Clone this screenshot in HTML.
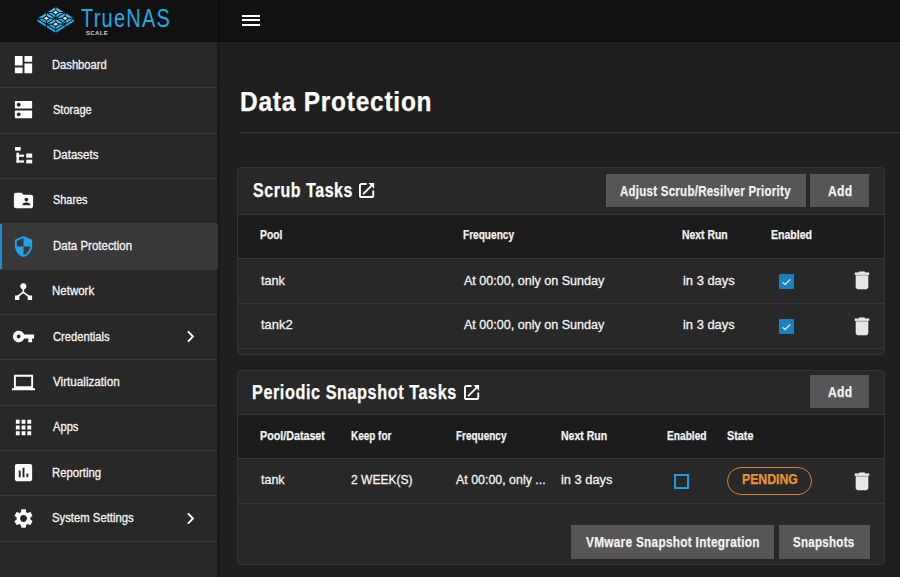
<!DOCTYPE html>
<html><head><meta charset="utf-8">
<style>
*{margin:0;padding:0;box-sizing:border-box}
html,body{width:900px;height:577px;overflow:hidden;background:#1f1f1f;font-family:"Liberation Sans",sans-serif;color:#fff}
.abs{position:absolute}
.t{position:absolute;white-space:nowrap;line-height:1;transform-origin:0 0}
</style></head><body>
<div class="abs" style="left:0px;top:0px;width:900px;height:42px;background:#111;"></div>
<div class="abs" style="left:0px;top:42px;width:218px;height:535px;background:#282828;"></div>
<div class="abs" style="left:217.3px;top:42px;width:2.6px;height:535px;background:#1a1a1a;"></div><div class="abs" style="left:217.6px;top:0px;width:2px;height:42px;background:#0c0c0c;"></div><div class="abs" style="left:0px;top:40.6px;width:900px;height:1.6px;background:#0b0b0b;"></div>
<svg class="abs" style="left:0;top:0" width="90" height="42" viewBox="0 0 90 42"><path d="M37.0 18.299999999999997 L55.7 30.0 L74.4 18.299999999999997 L74.4 21.699999999999996 L55.7 33.4 L37.0 21.699999999999996Z" fill="#1ea6e6" stroke="#0d0d0d" stroke-width="0.9" stroke-linejoin="round"/><path d="M55.7 30.0 V33.4 M46.35 24.15 V27.549999999999997 M65.05 24.15 V27.549999999999997" stroke="#0d0d0d" stroke-width="0.9"/><path d="M55.70 6.60 L65.05 12.45 L55.70 18.30 L46.35 12.45Z" fill="#0d0d0d"/><path d="M55.70 6.60 L65.05 12.45 L59.40 12.45 L55.70 10.15Z" fill="#46c4f6" stroke="#0d0d0d" stroke-width="0.8" stroke-linejoin="round"/><path d="M65.05 12.45 L55.70 18.30 L55.70 14.75 L59.40 12.45Z" fill="#27aeec" stroke="#0d0d0d" stroke-width="0.8" stroke-linejoin="round"/><path d="M55.70 18.30 L46.35 12.45 L52.00 12.45 L55.70 14.75Z" fill="#22a5e6" stroke="#0d0d0d" stroke-width="0.8" stroke-linejoin="round"/><path d="M46.35 12.45 L55.70 6.60 L55.70 10.15 L52.00 12.45Z" fill="#3dbcf3" stroke="#0d0d0d" stroke-width="0.8" stroke-linejoin="round"/><path d="M55.7 10.85 L58.2 12.45 L55.7 14.049999999999999 L53.2 12.45Z" fill="#e9dfdc"/><path d="M46.35 12.45 L55.70 18.30 L46.35 24.15 L37.00 18.30Z" fill="#0d0d0d"/><path d="M46.35 12.45 L55.70 18.30 L50.05 18.30 L46.35 16.00Z" fill="#46c4f6" stroke="#0d0d0d" stroke-width="0.8" stroke-linejoin="round"/><path d="M55.70 18.30 L46.35 24.15 L46.35 20.60 L50.05 18.30Z" fill="#27aeec" stroke="#0d0d0d" stroke-width="0.8" stroke-linejoin="round"/><path d="M46.35 24.15 L37.00 18.30 L42.65 18.30 L46.35 20.60Z" fill="#22a5e6" stroke="#0d0d0d" stroke-width="0.8" stroke-linejoin="round"/><path d="M37.00 18.30 L46.35 12.45 L46.35 16.00 L42.65 18.30Z" fill="#3dbcf3" stroke="#0d0d0d" stroke-width="0.8" stroke-linejoin="round"/><path d="M46.35 16.699999999999996 L48.85 18.299999999999997 L46.35 19.9 L43.85 18.299999999999997Z" fill="#e9dfdc"/><path d="M65.05 12.45 L74.40 18.30 L65.05 24.15 L55.70 18.30Z" fill="#0d0d0d"/><path d="M65.05 12.45 L74.40 18.30 L68.75 18.30 L65.05 16.00Z" fill="#46c4f6" stroke="#0d0d0d" stroke-width="0.8" stroke-linejoin="round"/><path d="M74.40 18.30 L65.05 24.15 L65.05 20.60 L68.75 18.30Z" fill="#27aeec" stroke="#0d0d0d" stroke-width="0.8" stroke-linejoin="round"/><path d="M65.05 24.15 L55.70 18.30 L61.35 18.30 L65.05 20.60Z" fill="#22a5e6" stroke="#0d0d0d" stroke-width="0.8" stroke-linejoin="round"/><path d="M55.70 18.30 L65.05 12.45 L65.05 16.00 L61.35 18.30Z" fill="#3dbcf3" stroke="#0d0d0d" stroke-width="0.8" stroke-linejoin="round"/><path d="M65.05 16.699999999999996 L67.55 18.299999999999997 L65.05 19.9 L62.55 18.299999999999997Z" fill="#e9dfdc"/><path d="M55.70 18.30 L65.05 24.15 L55.70 30.00 L46.35 24.15Z" fill="#0d0d0d"/><path d="M55.70 18.30 L65.05 24.15 L59.40 24.15 L55.70 21.85Z" fill="#46c4f6" stroke="#0d0d0d" stroke-width="0.8" stroke-linejoin="round"/><path d="M65.05 24.15 L55.70 30.00 L55.70 26.45 L59.40 24.15Z" fill="#27aeec" stroke="#0d0d0d" stroke-width="0.8" stroke-linejoin="round"/><path d="M55.70 30.00 L46.35 24.15 L52.00 24.15 L55.70 26.45Z" fill="#22a5e6" stroke="#0d0d0d" stroke-width="0.8" stroke-linejoin="round"/><path d="M46.35 24.15 L55.70 18.30 L55.70 21.85 L52.00 24.15Z" fill="#3dbcf3" stroke="#0d0d0d" stroke-width="0.8" stroke-linejoin="round"/><path d="M55.7 22.549999999999997 L58.2 24.15 L55.7 25.75 L53.2 24.15Z" fill="#e9dfdc"/></svg>
<div class="t" style="left:80.6px;top:5.6px;font-size:25px;color:#22a9e6;transform:scaleX(0.8);letter-spacing:1.55px">TrueNAS</div>
<div class="t" style="left:86px;top:30px;font-size:6px;font-weight:bold;color:#cfcfcf;letter-spacing:0.35px">SCALE</div>
<div class="abs" style="left:242px;top:14.85px;width:17.8px;height:2.1px;background:#fff;"></div>
<div class="abs" style="left:242px;top:19.35px;width:17.8px;height:2.1px;background:#fff;"></div>
<div class="abs" style="left:242px;top:23.9px;width:17.8px;height:2.1px;background:#fff;"></div>
<div class="abs" style="left:0;top:87.30px;width:217.2px;height:1px;background:#3a3a3a"></div><svg class="abs" style="left:11.8px;top:53.1px;overflow:visible" width="23.04" height="23.04" viewBox="0 0 24 24"><path fill="#fff" fill-rule="nonzero" d="M3 13h8V3H3v10zm0 8h8v-6H3v6zm10 0h8V11h-8v10zm0-18v6h8V3h-8z"/></svg><div class="t" style="left:52.22px;top:58.54px;font-size:12.3px;font-weight:400;color:#f4f4f4;transform:scaleX(0.9097);-webkit-text-stroke:0.3px #f4f4f4;letter-spacing:0px;">Dashboard</div><div class="abs" style="left:0;top:132.65px;width:217.2px;height:1px;background:#3a3a3a"></div><svg class="abs" style="left:11.8px;top:98.45px;overflow:visible" width="23.04" height="23.04" viewBox="0 0 24 24"><path fill="#fff" fill-rule="nonzero" d="M20 13H4c-.55 0-1 .45-1 1v6c0 .55.45 1 1 1h16c.55 0 1-.45 1-1v-6c0-.55-.45-1-1-1zM7 19c-1.1 0-2-.9-2-2s.9-2 2-2 2 .9 2 2-.9 2-2 2zM20 3H4c-.55 0-1 .45-1 1v6c0 .55.45 1 1 1h16c.55 0 1-.45 1-1V4c0-.55-.45-1-1-1zM7 9c-1.1 0-2-.9-2-2s.9-2 2-2 2 .9 2 2-.9 2-2 2z"/></svg><div class="t" style="left:53.14px;top:104.01px;font-size:12.3px;font-weight:400;color:#f4f4f4;transform:scaleX(0.8989);-webkit-text-stroke:0.3px #f4f4f4;letter-spacing:0px;">Storage</div><div class="abs" style="left:0;top:178.00px;width:217.2px;height:1px;background:#3a3a3a"></div><svg class="abs" style="left:14.8px;top:147.1px" width="20" height="20" viewBox="0 0 20 20"><g fill="#fff"><rect x="0" y="0" width="5.7" height="3.6"/><rect x="1.5" y="5.7" width="2.4" height="9.9"/><rect x="1.5" y="7.6" width="7.6" height="2.2"/><rect x="1.5" y="13.4" width="7.6" height="2.2"/><rect x="11.2" y="6.5" width="6" height="4.2"/><rect x="11.2" y="12.7" width="6" height="3.7"/></g></svg><div class="t" style="left:52.61px;top:148.78px;font-size:12.3px;font-weight:400;color:#f4f4f4;transform:scaleX(0.9367);-webkit-text-stroke:0.3px #f4f4f4;letter-spacing:0px;">Datasets</div><div class="abs" style="left:0;top:223.35px;width:217.2px;height:1px;background:#3a3a3a"></div><svg class="abs" style="left:11.8px;top:189.15px;overflow:visible" width="23.04" height="23.04" viewBox="0 0 24 24"><path fill="#fff" fill-rule="nonzero" d="M20 6h-8l-2-2H4c-1.1 0-1.99.9-1.99 2L2 18c0 1.1.9 2 2 2h16c1.1 0 2-.9 2-2V8c0-1.1-.9-2-2-2zm-5 3c1.1 0 2 .9 2 2s-.9 2-2 2-2-.9-2-2 .9-2 2-2zm4 8h-8v-1c0-1.33 2.67-2 4-2s4 .67 4 2v1z"/></svg><div class="t" style="left:52.85px;top:193.9px;font-size:12.3px;font-weight:400;color:#f4f4f4;transform:scaleX(0.8871);-webkit-text-stroke:0.3px #f4f4f4;letter-spacing:0px;">Shares</div><div class="abs" style="left:0;top:223.70px;width:218px;height:45.35px;background:#383838"></div><div class="abs" style="left:0;top:223.70px;width:1.7px;height:45.35px;background:#1a8dd0"></div><div class="abs" style="left:0;top:268.70px;width:217.2px;height:1px;background:#3a3a3a"></div><svg class="abs" style="left:11.8px;top:234.5px;overflow:visible" width="23.04" height="23.04" viewBox="0 0 24 24"><path fill="#1ea3e8" fill-rule="evenodd" d="M12 1L3 5v6c0 5.55 3.84 10.74 9 12 5.16-1.26 9-6.45 9-12V5l-9-4zm0 10.99h7c-.53 4.12-3.28 7.79-7 8.94V12H5V6.3l7-3.11v8.8z"/></svg><div class="t" style="left:52.62px;top:239.68px;font-size:12.3px;font-weight:400;color:#f4f4f4;transform:scaleX(0.9336);-webkit-text-stroke:0.3px #f4f4f4;letter-spacing:0px;">Data Protection</div><div class="abs" style="left:0;top:314.05px;width:217.2px;height:1px;background:#3a3a3a"></div><svg class="abs" style="left:14.8px;top:281.95px" width="20" height="20" viewBox="0 0 20 20"><circle cx="8.3" cy="4.3" r="3.0" fill="#fff"/><path d="M8.3 6.5 V10.2 L2.6 14.6 M8.3 10.2 L14.2 14.6" stroke="#fff" stroke-width="1.7" fill="none"/><rect x="0" y="13.5" width="4.3" height="4.5" fill="#fff"/><rect x="12.7" y="13.5" width="4.4" height="4.5" fill="#fff"/></svg><div class="t" style="left:51.9px;top:285.48px;font-size:12.3px;font-weight:400;color:#f4f4f4;transform:scaleX(0.9354);-webkit-text-stroke:0.3px #f4f4f4;letter-spacing:0px;">Network</div><div class="abs" style="left:0;top:359.40px;width:217.2px;height:1px;background:#3a3a3a"></div><svg class="abs" style="left:11.8px;top:325.2px;overflow:visible" width="23.04" height="23.04" viewBox="0 0 24 24"><path fill="#fff" fill-rule="nonzero" d="M12.65 10C11.83 7.67 9.61 6 7 6c-3.31 0-6 2.69-6 6s2.69 6 6 6c2.61 0 4.83-1.67 5.65-4H17v4h4v-4h2v-4H12.65zM7 14c-1.1 0-2-.9-2-2s.9-2 2-2 2 .9 2 2-.9 2-2 2z"/></svg><div class="t" style="left:52.6px;top:330.6px;font-size:12.3px;font-weight:400;color:#f4f4f4;transform:scaleX(0.9105);-webkit-text-stroke:0.3px #f4f4f4;letter-spacing:0px;">Credentials</div><svg class="abs" style="left:178.7px;top:325.2px;overflow:visible" width="23.04" height="23.04" viewBox="0 0 24 24"><path fill="#fff" fill-rule="nonzero" d="M10 6L8.59 7.41 13.17 12l-4.58 4.59L10 18l6-6z"/></svg><div class="abs" style="left:0;top:404.75px;width:217.2px;height:1px;background:#3a3a3a"></div><svg class="abs" style="left:11.8px;top:370.55px;overflow:visible" width="23.04" height="23.04" viewBox="0 0 24 24"><path fill="#fff" fill-rule="nonzero" d="M2 4h20v14h2v2H0v-2h2zM4 6v10h16V6z"/></svg><div class="t" style="left:52.78px;top:375.63px;font-size:12.3px;font-weight:400;color:#f4f4f4;transform:scaleX(0.9498);-webkit-text-stroke:0.3px #f4f4f4;letter-spacing:0px;">Virtualization</div><div class="abs" style="left:0;top:450.10px;width:217.2px;height:1px;background:#3a3a3a"></div><svg class="abs" style="left:11.8px;top:415.9px;overflow:visible" width="23.04" height="23.04" viewBox="0 0 24 24"><path fill="#fff" fill-rule="nonzero" d="M4 8h4V4H4v4zm6 12h4v-4h-4v4zm-6 0h4v-4H4v4zm0-6h4v-4H4v4zm6 0h4v-4h-4v4zm6-10v4h4V4h-4zm-6 4h4V4h-4v4zm6 6h4v-4h-4v4zm0 6h4v-4h-4v4z"/></svg><div class="t" style="left:52.84px;top:421.25px;font-size:12.3px;font-weight:400;color:#f4f4f4;transform:scaleX(0.9065);-webkit-text-stroke:0.3px #f4f4f4;letter-spacing:0px;">Apps</div><div class="abs" style="left:0;top:495.45px;width:217.2px;height:1px;background:#3a3a3a"></div><svg class="abs" style="left:11.8px;top:461.25px;overflow:visible" width="23.04" height="23.04" viewBox="0 0 24 24"><path fill="#fff" fill-rule="nonzero" d="M19 3H5c-1.1 0-2 .9-2 2v14c0 1.1.9 2 2 2h14c1.1 0 2-.9 2-2V5c0-1.1-.9-2-2-2zM9 17H7v-7h2v7zm4 0h-2V7h2v10zm4 0h-2v-4h2v4z"/></svg><div class="t" style="left:52.05px;top:466.53px;font-size:12.3px;font-weight:400;color:#f4f4f4;transform:scaleX(0.9207);-webkit-text-stroke:0.3px #f4f4f4;letter-spacing:0px;">Reporting</div><div class="abs" style="left:0;top:540.80px;width:217.2px;height:1px;background:#3a3a3a"></div><svg class="abs" style="left:11.8px;top:506.6px;overflow:visible" width="23.04" height="23.04" viewBox="0 0 24 24"><path fill="#fff" fill-rule="nonzero" d="M19.14 12.94c.04-.3.06-.61.06-.94 0-.32-.02-.64-.07-.94l2.03-1.58c.18-.14.23-.41.12-.61l-1.92-3.32c-.12-.22-.37-.29-.59-.22l-2.39.96c-.5-.38-1.03-.7-1.62-.94l-.36-2.54c-.04-.24-.24-.41-.48-.41h-3.84c-.24 0-.43.17-.47.41l-.36 2.54c-.59.24-1.130.57-1.62.94l-2.39-.96c-.22-.08-.47 0-.59.22L2.74 8.87c-.12.21-.08.47.12.61l2.03 1.58c-.05.3-.09.63-.09.94s.02.64.07.94l-2.030 1.58c-.18.14-.23.41-.12.61l1.92 3.32c.12.22.37.29.59.22l2.39-.96c.5.38 1.03.7 1.62.94l.36 2.54c.05.24.24.41.48.41h3.84c.24 0 .44-.17.47-.41l.36-2.54c.59-.24 1.13-.56 1.62-.94l2.39.96c.22.08.47 0 .59-.22l1.92-3.32c.12-.22.07-.47-.12-.61l-2.01-1.58zM12 15.6c-1.98 0-3.6-1.620-3.6-3.6s1.62-3.6 3.6-3.6 3.6 1.62 3.6 3.6-1.62 3.6-3.6 3.6z"/></svg><div class="t" style="left:52.44px;top:512.08px;font-size:12.3px;font-weight:400;color:#f4f4f4;transform:scaleX(0.92);-webkit-text-stroke:0.3px #f4f4f4;letter-spacing:0px;">System Settings</div><svg class="abs" style="left:178.7px;top:506.6px;overflow:visible" width="23.04" height="23.04" viewBox="0 0 24 24"><path fill="#fff" fill-rule="nonzero" d="M10 6L8.59 7.41 13.17 12l-4.58 4.59L10 18l6-6z"/></svg>
<div class="t" style="left:239.52px;top:87.24px;font-size:28.5px;font-weight:700;color:#fff;transform:scaleX(0.8581);-webkit-text-stroke:0.25px #fff;letter-spacing:0.9px;">Data Protection</div>
<div class="abs" style="left:240px;top:131.5px;width:660px;height:1px;background:#3a3a3a;"></div>
<div class="abs" style="left:237px;top:167px;width:648px;height:187.5px;background:#282828;border:1px solid #353535;border-radius:4px"></div>
<div class="abs" style="left:238px;top:214.4px;width:646px;height:43.6px;background:#1c1c1c;"></div>
<div class="abs" style="left:238px;top:213.6px;width:646px;height:1px;background:#383838;"></div>
<div class="abs" style="left:238px;top:257.8px;width:646px;height:1px;background:#383838;"></div>
<div class="abs" style="left:238px;top:303.3px;width:646px;height:1px;background:#383838;"></div>
<div class="abs" style="left:238px;top:347.5px;width:646px;height:1px;background:#383838;"></div>
<div class="t" style="left:252.86px;top:180.54px;font-size:19.6px;font-weight:700;color:#fff;transform:scaleX(0.8141);-webkit-text-stroke:0.25px #fff;letter-spacing:0.7px;">Scrub Tasks</div>
<svg class="abs" style="left:358.8px;top:182.6px;overflow:visible" width="16" height="16" viewBox="0 0 16 16"><path d="M7.6 0.95 H2.6 Q0.95 0.95 0.95 2.6 V12.4 Q0.95 14.05 2.6 14.05 H12.6 Q14.25 14.05 14.25 12.4 V7.6" stroke="#fff" stroke-width="1.9" fill="none"/><path d="M4.6 10.6 L12.6 2.6" stroke="#fff" stroke-width="1.9" stroke-linecap="round"/><path d="M9.4 0.1 H15.1 V5.8 Z" fill="#fff"/></svg>
<div class="abs" style="left:605.6px;top:174px;width:200.2px;height:33.2px;background:#565656;"></div>
<div class="t" style="left:620.47px;top:183.8px;font-size:14.2px;font-weight:700;color:#f2f2f2;transform:scaleX(0.8073);-webkit-text-stroke:0.25px #f2f2f2;letter-spacing:0.35px;">Adjust Scrub/Resilver Priority</div>
<div class="abs" style="left:810px;top:174px;width:59.4px;height:33.2px;background:#565656;"></div>
<div class="t" style="left:827.94px;top:184.19px;font-size:14.2px;font-weight:700;color:#f2f2f2;transform:scaleX(0.8497);-webkit-text-stroke:0.25px #f2f2f2;letter-spacing:0.35px;">Add</div>
<div class="t" style="left:260.37px;top:228.5px;font-size:12.3px;font-weight:700;color:#f2f2f2;transform:scaleX(0.8408);-webkit-text-stroke:0.25px #f2f2f2;letter-spacing:0px;">Pool</div>
<div class="t" style="left:463.23px;top:228.5px;font-size:12.3px;font-weight:700;color:#f2f2f2;transform:scaleX(0.8204);-webkit-text-stroke:0.25px #f2f2f2;letter-spacing:0px;">Frequency</div>
<div class="t" style="left:682.31px;top:228.5px;font-size:12.3px;font-weight:700;color:#f2f2f2;transform:scaleX(0.8452);-webkit-text-stroke:0.25px #f2f2f2;letter-spacing:0px;">Next Run</div>
<div class="t" style="left:771.39px;top:228.5px;font-size:12.3px;font-weight:700;color:#f2f2f2;transform:scaleX(0.8583);-webkit-text-stroke:0.25px #f2f2f2;letter-spacing:0px;">Enabled</div>
<div class="t" style="left:260.51px;top:273.99px;font-size:13.2px;font-weight:400;color:#f2f2f2;transform:scaleX(0.9613);-webkit-text-stroke:0.3px #f2f2f2;letter-spacing:0px;">tank</div>
<div class="t" style="left:464.14px;top:273.99px;font-size:13.2px;font-weight:400;color:#f2f2f2;transform:scaleX(0.9519);-webkit-text-stroke:0.3px #f2f2f2;letter-spacing:0px;">At 00:00, only on Sunday</div>
<div class="t" style="left:683.15px;top:273.99px;font-size:13.2px;font-weight:400;color:#f2f2f2;transform:scaleX(0.9794);-webkit-text-stroke:0.3px #f2f2f2;letter-spacing:0px;">in 3 days</div>
<div class="t" style="left:260.51px;top:317.8px;font-size:13.2px;font-weight:400;color:#f2f2f2;transform:scaleX(0.9789);-webkit-text-stroke:0.3px #f2f2f2;letter-spacing:0px;">tank2</div>
<div class="t" style="left:464.14px;top:317.8px;font-size:13.2px;font-weight:400;color:#f2f2f2;transform:scaleX(0.9519);-webkit-text-stroke:0.3px #f2f2f2;letter-spacing:0px;">At 00:00, only on Sunday</div>
<div class="t" style="left:683.15px;top:317.8px;font-size:13.2px;font-weight:400;color:#f2f2f2;transform:scaleX(0.9794);-webkit-text-stroke:0.3px #f2f2f2;letter-spacing:0px;">in 3 days</div>
<div class="abs" style="left:778.6px;top:273.8px;width:15px;height:15px;background:#1a81bf;border-radius:1px"></div>
<svg class="abs" style="left:778.6px;top:273.8px" width="15" height="15" viewBox="0 0 15 15"><path d="M3.6 8.4 L6 10.5 L11.3 5.4" stroke="#eef6fb" stroke-width="1.1" fill="none"/></svg>
<svg class="abs" style="left:850.4px;top:269.2px" width="24" height="22.8" viewBox="0 0 24 24" preserveAspectRatio="none"><path fill="#e6e6e6" stroke="#f4f4f4" stroke-width="0.6" d="M6 19c0 1.1.9 2 2 2h8c1.1 0 2-.9 2-2V7H6v12zM19 4h-3.5l-1-1h-5l-1 1H5v2h14V4z"/></svg>
<div class="abs" style="left:778.6px;top:319.1px;width:15px;height:15px;background:#1a81bf;border-radius:1px"></div>
<svg class="abs" style="left:778.6px;top:319.1px" width="15" height="15" viewBox="0 0 15 15"><path d="M3.6 8.4 L6 10.5 L11.3 5.4" stroke="#eef6fb" stroke-width="1.1" fill="none"/></svg>
<svg class="abs" style="left:850.4px;top:314.5px" width="24" height="22.8" viewBox="0 0 24 24" preserveAspectRatio="none"><path fill="#e6e6e6" stroke="#f4f4f4" stroke-width="0.6" d="M6 19c0 1.1.9 2 2 2h8c1.1 0 2-.9 2-2V7H6v12zM19 4h-3.5l-1-1h-5l-1 1H5v2h14V4z"/></svg>
<div class="abs" style="left:237px;top:370px;width:648px;height:194.5px;background:#282828;border:1px solid #353535;border-radius:4px"></div>
<div class="abs" style="left:238px;top:414.4px;width:646px;height:43.3px;background:#1c1c1c;"></div>
<div class="abs" style="left:238px;top:414px;width:646px;height:1px;background:#383838;"></div>
<div class="abs" style="left:238px;top:457.7px;width:646px;height:1px;background:#383838;"></div>
<div class="abs" style="left:238px;top:503.2px;width:646px;height:1px;background:#383838;"></div>
<div class="t" style="left:251.95px;top:382.59px;font-size:19.6px;font-weight:700;color:#fff;transform:scaleX(0.8271);-webkit-text-stroke:0.25px #fff;letter-spacing:0.7px;">Periodic Snapshot Tasks</div>
<svg class="abs" style="left:464.4px;top:385.0px;overflow:visible" width="16" height="16" viewBox="0 0 16 16"><path d="M7.6 0.95 H2.6 Q0.95 0.95 0.95 2.6 V12.4 Q0.95 14.05 2.6 14.05 H12.6 Q14.25 14.05 14.25 12.4 V7.6" stroke="#fff" stroke-width="1.9" fill="none"/><path d="M4.6 10.6 L12.6 2.6" stroke="#fff" stroke-width="1.9" stroke-linecap="round"/><path d="M9.4 0.1 H15.1 V5.8 Z" fill="#fff"/></svg>
<div class="abs" style="left:810px;top:375px;width:59.4px;height:33.3px;background:#565656;"></div>
<div class="t" style="left:827.94px;top:384.59px;font-size:14.2px;font-weight:700;color:#f2f2f2;transform:scaleX(0.8497);-webkit-text-stroke:0.25px #f2f2f2;letter-spacing:0.35px;">Add</div>
<div class="t" style="left:260.38px;top:429.56px;font-size:12.3px;font-weight:700;color:#f2f2f2;transform:scaleX(0.8712);-webkit-text-stroke:0.25px #f2f2f2;letter-spacing:0px;">Pool/Dataset</div>
<div class="t" style="left:351.43px;top:429.56px;font-size:12.3px;font-weight:700;color:#f2f2f2;transform:scaleX(0.8099);-webkit-text-stroke:0.25px #f2f2f2;letter-spacing:0px;">Keep for</div>
<div class="t" style="left:456.44px;top:429.56px;font-size:12.3px;font-weight:700;color:#f2f2f2;transform:scaleX(0.811);-webkit-text-stroke:0.25px #f2f2f2;letter-spacing:0px;">Frequency</div>
<div class="t" style="left:561.41px;top:429.56px;font-size:12.3px;font-weight:700;color:#f2f2f2;transform:scaleX(0.8549);-webkit-text-stroke:0.25px #f2f2f2;letter-spacing:0px;">Next Run</div>
<div class="t" style="left:666.62px;top:429.56px;font-size:12.3px;font-weight:700;color:#f2f2f2;transform:scaleX(0.8272);-webkit-text-stroke:0.25px #f2f2f2;letter-spacing:0px;">Enabled</div>
<div class="t" style="left:726.66px;top:429.56px;font-size:12.3px;font-weight:700;color:#f2f2f2;transform:scaleX(0.8804);-webkit-text-stroke:0.25px #f2f2f2;letter-spacing:0px;">State</div>
<div class="t" style="left:260.82px;top:473.0px;font-size:13.2px;font-weight:400;color:#f2f2f2;transform:scaleX(0.9444);-webkit-text-stroke:0.3px #f2f2f2;letter-spacing:0px;">tank</div>
<div class="t" style="left:350.6px;top:473.0px;font-size:13.2px;font-weight:400;color:#f2f2f2;transform:scaleX(0.914);-webkit-text-stroke:0.3px #f2f2f2;letter-spacing:0px;">2 WEEK(S)</div>
<div class="t" style="left:455.84px;top:473.0px;font-size:13.2px;font-weight:400;color:#f2f2f2;transform:scaleX(0.9406);-webkit-text-stroke:0.3px #f2f2f2;letter-spacing:0px;">At 00:00, only ...</div>
<div class="t" style="left:561.25px;top:473.0px;font-size:13.2px;font-weight:400;color:#f2f2f2;transform:scaleX(0.9741);-webkit-text-stroke:0.3px #f2f2f2;letter-spacing:0px;">in 3 days</div>
<div class="abs" style="left:673.9px;top:473.8px;width:15.2px;height:15.2px;background:transparent;border:2px solid #1a9de2"></div>
<div class="abs" style="left:727.3px;top:466.7px;width:85.2px;height:28px;background:transparent;border:1.8px solid #d4842f;border-radius:14px"></div>
<div class="t" style="left:741.92px;top:471.99px;font-size:14.2px;font-weight:700;color:#ef922f;transform:scaleX(0.8644);-webkit-text-stroke:0.25px #ef922f;letter-spacing:0px;">PENDING</div>
<svg class="abs" style="left:850.1px;top:469.8px" width="24" height="22.8" viewBox="0 0 24 24" preserveAspectRatio="none"><path fill="#e6e6e6" stroke="#f4f4f4" stroke-width="0.6" d="M6 19c0 1.1.9 2 2 2h8c1.1 0 2-.9 2-2V7H6v12zM19 4h-3.5l-1-1h-5l-1 1H5v2h14V4z"/></svg>
<div class="abs" style="left:571.3px;top:525.3px;width:202.9px;height:33.3px;background:#565656;"></div>
<div class="t" style="left:586.2px;top:534.65px;font-size:14.2px;font-weight:700;color:#f2f2f2;transform:scaleX(0.832);-webkit-text-stroke:0.25px #f2f2f2;letter-spacing:0.35px;">VMware Snapshot Integration</div>
<div class="abs" style="left:779.1px;top:525.3px;width:90.7px;height:33.3px;background:#565656;"></div>
<div class="t" style="left:793.26px;top:534.65px;font-size:14.2px;font-weight:700;color:#f2f2f2;transform:scaleX(0.8125);-webkit-text-stroke:0.25px #f2f2f2;letter-spacing:0.35px;">Snapshots</div>
</body></html>
